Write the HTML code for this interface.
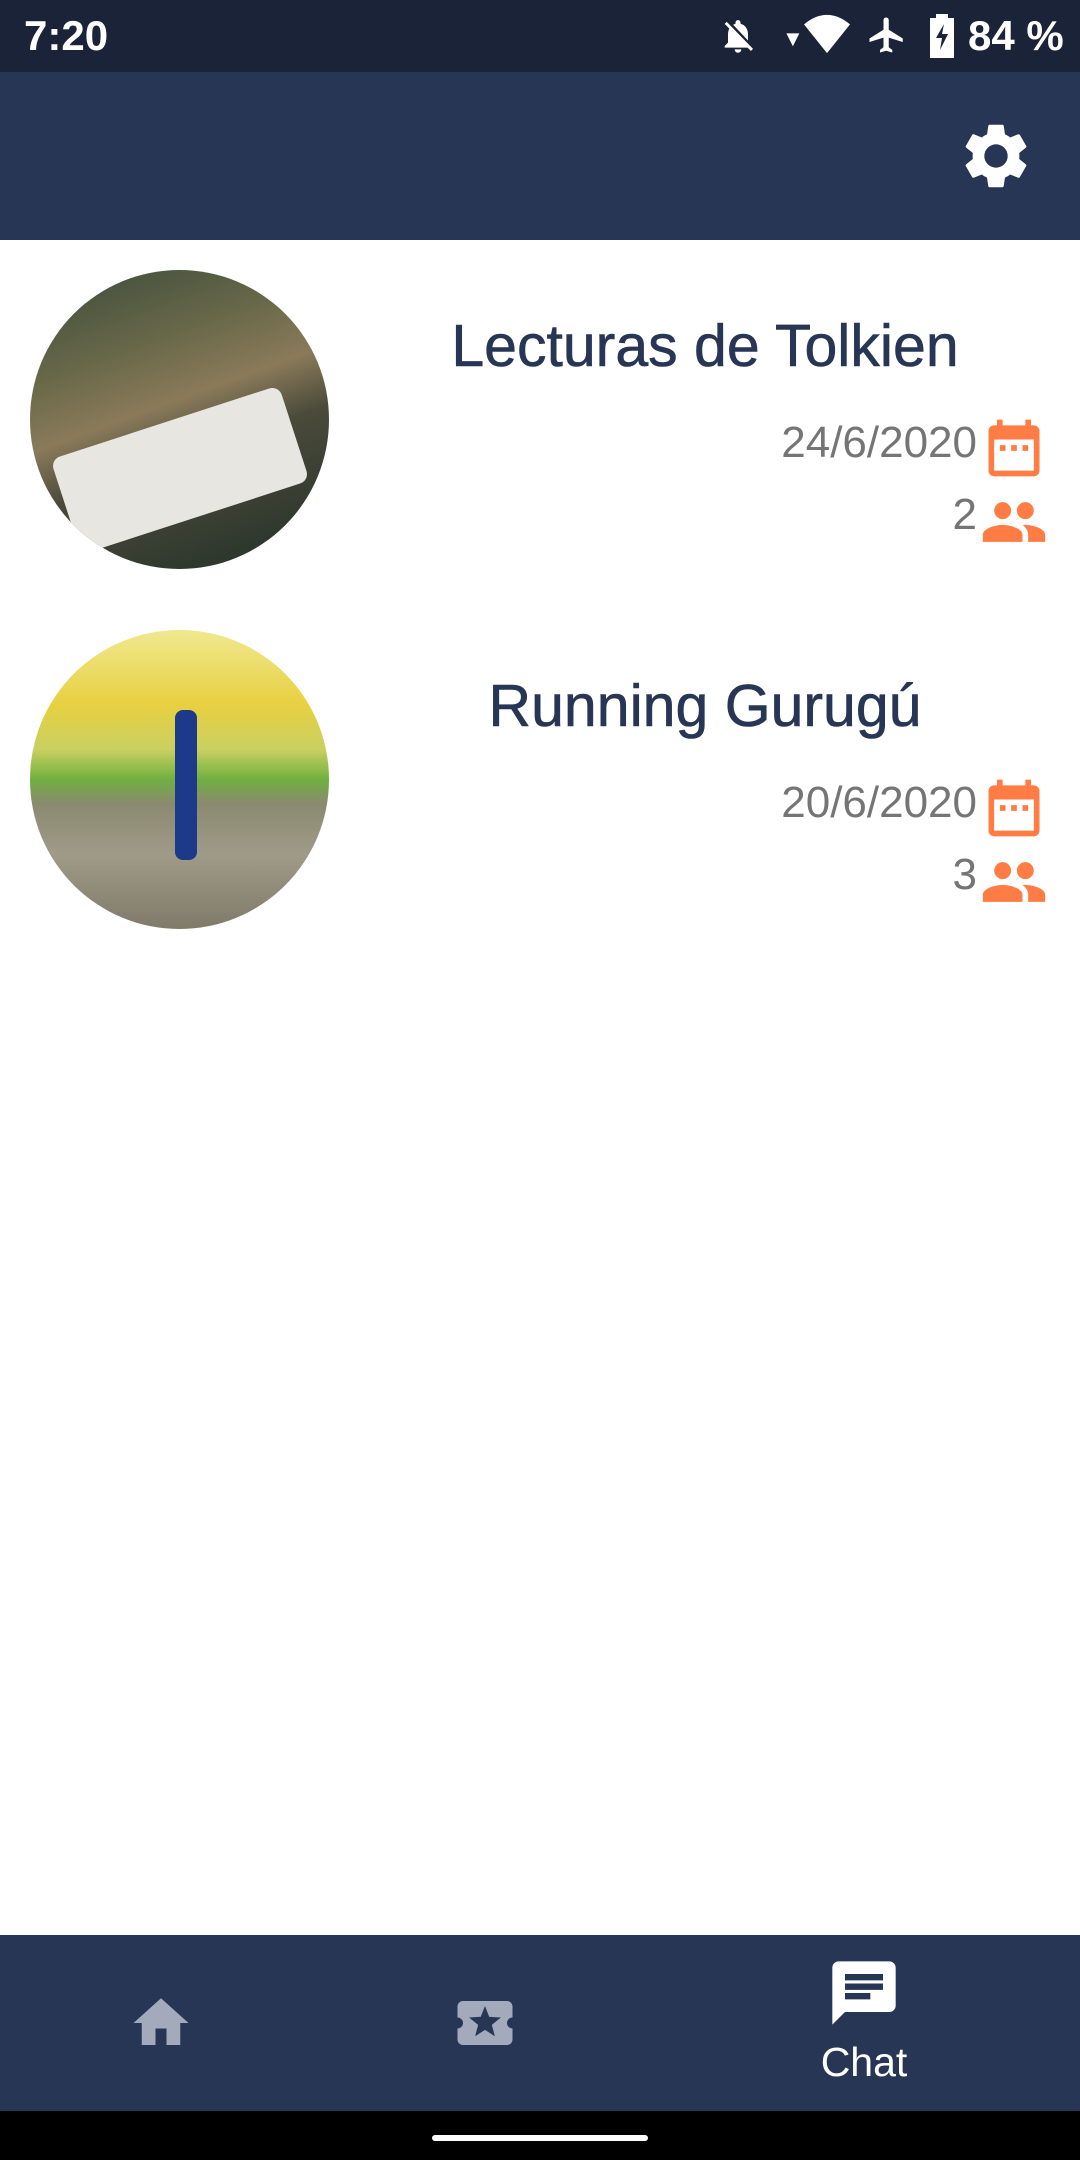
<!DOCTYPE html>
<html><head><meta charset="utf-8"><style>
*{margin:0;padding:0;box-sizing:border-box}
body{width:1080px;height:2160px;position:relative;background:#fff;font-family:"Liberation Sans",sans-serif;overflow:hidden}
.abs{position:absolute}
.status{left:0;top:0;width:1080px;height:72px;background:#1b2339;color:#fff}
.appbar{left:0;top:72px;width:1080px;height:168px;background:#283655}
.circle{width:299px;height:299px;border-radius:50%;overflow:hidden}
.title{width:700px;text-align:center;color:#283655;font-size:59px;-webkit-text-stroke:0.6px #283655}
.meta{color:#757575;font-size:44px;text-align:right}
.nav{left:0;top:1935px;width:1080px;height:176px;background:#283655}
.sys{left:0;top:2111px;width:1080px;height:49px;background:#000}
</style></head><body>
<div class="abs status">
 <div class="abs" style="left:24px;top:12px;font-size:42px;font-weight:bold">7:20</div>
 <svg class="abs" style="left:718px;top:16px" width="40" height="40" viewBox="0 0 24 24"><path fill="#fff" d="M20 18.69L7.84 6.14 5.27 3.49 4 4.76l2.8 2.8v.01c-.52.99-.8 2.16-.8 3.42v5l-2 2v1h13.73l2 2L21 19.72l-1-1.03zM12 22c1.11 0 2-.89 2-2h-4c0 1.11.89 2 2 2zm6-7.32V11c0-3.08-1.64-5.64-4.5-6.32V4c0-.83-.67-1.5-1.5-1.5s-1.5.67-1.5 1.5v.68c-.15.03-.29.08-.42.12-.1.03-.2.07-.3.11h-.01c-.01 0-.01 0-.02.01-.23.09-.46.2-.68.31 0 0-.01 0-.01.01L18 14.68z"/></svg>
 <div class="abs" style="left:782px;top:26px;font-size:22px">▼</div>
 <svg class="abs" style="left:804px;top:14px" width="46" height="40" viewBox="0 0 24 20"><path fill="#fff" d="M12 20L0 5C3.5 2 7.5 0 12 0s8.5 2 12 5z"/></svg>
 <svg class="abs" style="left:866px;top:14px" width="42" height="42" viewBox="0 0 24 24"><path fill="#fff" d="M21 16v-2l-8-5V3.5c0-.83-.67-1.5-1.5-1.5S10 2.67 10 3.5V9l-8 5v2l8-2.5V19l-2 1.5V22l3.5-1 3.5 1v-1.5L13 19v-5.5l8 2.5z"/></svg>
 <svg class="abs" style="left:928px;top:14px" width="28" height="44" viewBox="0 0 14 22"><path fill="#fff" d="M4 0h6v2h3v20H1V2h3z"/><path fill="#1b2339" d="M8 5L4 12h3l-1 6 4-8H7z"/></svg>
 <div class="abs" style="left:968px;top:12px;font-size:42px;font-weight:bold">84 %</div>
</div>
<div class="abs appbar">
 <svg class="abs" style="left:957px;top:45px" width="78" height="78" viewBox="0 0 24 24"><path fill="#fff" d="M19.14 12.94c.04-.3.06-.61.06-.94 0-.32-.02-.64-.07-.94l2.03-1.58a.49.49 0 0 0 .12-.61l-1.92-3.32a.49.49 0 0 0-.59-.22l-2.39.96c-.5-.38-1.03-.7-1.62-.94l-.36-2.540a.48.48 0 0 0-.48-.41h-3.84c-.24 0-.43.17-.47.41l-.36 2.54c-.59.24-1.13.57-1.62.94l-2.39-.96a.48.48 0 0 0-.59.22L2.74 8.87c-.12.21-.08.47.12.61l2.03 1.58c-.05.3-.09.63-.09.94s.02.64.07.94l-2.03 1.58a.49.49 0 0 0-.12.61l1.92 3.32c.12.22.37.29.59.22l2.39-.96c.5.38 1.03.7 1.62.94l.36 2.54c.05.24.24.41.48.41h3.840c.24 0 .44-.17.47-.41l.36-2.54c.59-.24 1.13-.56 1.62-.94l2.39.96c.22.08.47 0 .59-.22l1.92-3.32c.12-.22.07-.47-.12-.61l-2.01-1.58zM12 15.6A3.6 3.6 0 1 1 12 8.4a3.6 3.6 0 0 1 0 7.2z"/></svg>
</div>

<div class="abs circle" style="left:30px;top:270px;background:linear-gradient(160deg,#3a4a3a 0%,#6b6a4a 30%,#8a7a5a 45%,#4a4a3a 60%,#223028 100%)">
 <div class="abs" style="left:30px;top:150px;width:240px;height:100px;background:#e8e6e0;transform:rotate(-18deg);border-radius:10px"></div>
</div>
<div class="abs title" style="left:355px;top:312px">Lecturas de Tolkien</div>
<div class="abs meta" style="left:700px;top:418px;width:277px">24/6/2020</div>
<svg class="abs" style="left:980px;top:414px" width="68" height="68" viewBox="0 0 24 24"><path fill="#ff7d45" d="M9 11H7v2h2v-2zm4 0h-2v2h2v-2zm4 0h-2v2h2v-2zm2-7h-1V2h-2v2H8V2H6v2H5a2 2 0 0 0-2 2v14a2 2 0 0 0 2 2h14a2 2 0 0 0 2-2V6a2 2 0 0 0-2-2zm0 16H5V9h14v11z"/></svg>
<div class="abs meta" style="left:900px;top:490px;width:77px">2</div>
<svg class="abs" style="left:980px;top:488px" width="68" height="68" viewBox="0 0 24 24"><path fill="#ff7d45" d="M16 11c1.66 0 2.99-1.34 2.99-3S17.66 5 16 5s-3 1.34-3 3 1.34 3 3 3zm-8 0c1.66 0 2.99-1.34 2.99-3S9.66 5 8 5 5 6.34 5 8s1.34 3 3 3zm0 2c-2.33 0-7 1.17-7 3.5V19h14v-2.5C15 14.17 10.33 13 8 13zm8 0c-.29 0-.62.02-.97.05 1.16.84 1.970 1.97 1.97 3.45V19h6v-2.5c0-2.33-4.67-3.5-7-3.5z"/></svg>

<div class="abs circle" style="left:30px;top:630px;background:linear-gradient(180deg,#f0e890 0%,#e8d040 25%,#c8d060 40%,#70b040 50%,#8a8a70 58%,#a09a88 75%,#807a6a 100%)">
 <div class="abs" style="left:145px;top:80px;width:22px;height:150px;background:#1d3a8a;border-radius:8px"></div>
</div>
<div class="abs title" style="left:355px;top:672px">Running Gurugú</div>
<div class="abs meta" style="left:700px;top:778px;width:277px">20/6/2020</div>
<svg class="abs" style="left:980px;top:774px" width="68" height="68" viewBox="0 0 24 24"><path fill="#ff7d45" d="M9 11H7v2h2v-2zm4 0h-2v2h2v-2zm4 0h-2v2h2v-2zm2-7h-1V2h-2v2H8V2H6v2H5a2 2 0 0 0-2 2v14a2 2 0 0 0 2 2h14a2 2 0 0 0 2-2V6a2 2 0 0 0-2-2zm0 16H5V9h14v11z"/></svg>
<div class="abs meta" style="left:900px;top:850px;width:77px">3</div>
<svg class="abs" style="left:980px;top:848px" width="68" height="68" viewBox="0 0 24 24"><path fill="#ff7d45" d="M16 11c1.66 0 2.99-1.34 2.99-3S17.66 5 16 5s-3 1.34-3 3 1.34 3 3 3zm-8 0c1.66 0 2.99-1.34 2.99-3S9.66 5 8 5 5 6.34 5 8s1.34 3 3 3zm0 2c-2.33 0-7 1.17-7 3.5V19h14v-2.5C15 14.17 10.33 13 8 13zm8 0c-.29 0-.62.02-.97.05 1.16.84 1.97 1.97 1.97 3.45V19h6v-2.5c0-2.33-4.67-3.5-7-3.5z"/></svg>

<div class="abs nav">
 <svg class="abs" style="left:128px;top:55px" width="66" height="66" viewBox="0 0 24 24"><path fill="#a3aabb" d="M10 20v-6h4v6h5v-8h3L12 3 2 12h3v8z"/></svg>
 <svg class="abs" style="left:452px;top:55px" width="66" height="66" viewBox="0 0 24 24"><path fill="#a3aabb" d="M20 12c0-1.1.9-2 2-2V6c0-1.1-.9-2-2-2H4c-1.1 0-2 .9-2 2v4c1.1 0 2 .9 2 2s-.9 2-2 2v4c0 1.1.9 2 2 2h16c1.1 0 2-.9 2-2v-4c-1.1 0-2-.9-2-2zm-4.42 4.8L12 14.5l-3.58 2.3 1.08-4.12-3.29-2.69 4.24-.25L12 5.8l1.54 3.95 4.24.25-3.29 2.69 1.09 4.11z"/></svg>
 <svg class="abs" style="left:826px;top:20px" width="76" height="76" viewBox="0 0 24 24"><path fill="#fff" d="M20 2H4c-1.1 0-2 .9-2 2v18l4-4h14c1.1 0 2-.9 2-2V4c0-1.1-.9-2-2-2zM6 9h12v2H6V9zm8 5H6v-2h8v2zm4-6H6V6h12v2z"/></svg>
 <div class="abs" style="left:764px;top:104px;width:200px;text-align:center;color:#fff;font-size:41px">Chat</div>
</div>
<div class="abs sys"><div class="abs" style="left:432px;top:24px;width:216px;height:6px;border-radius:3px;background:#fff"></div></div>
</body></html>
